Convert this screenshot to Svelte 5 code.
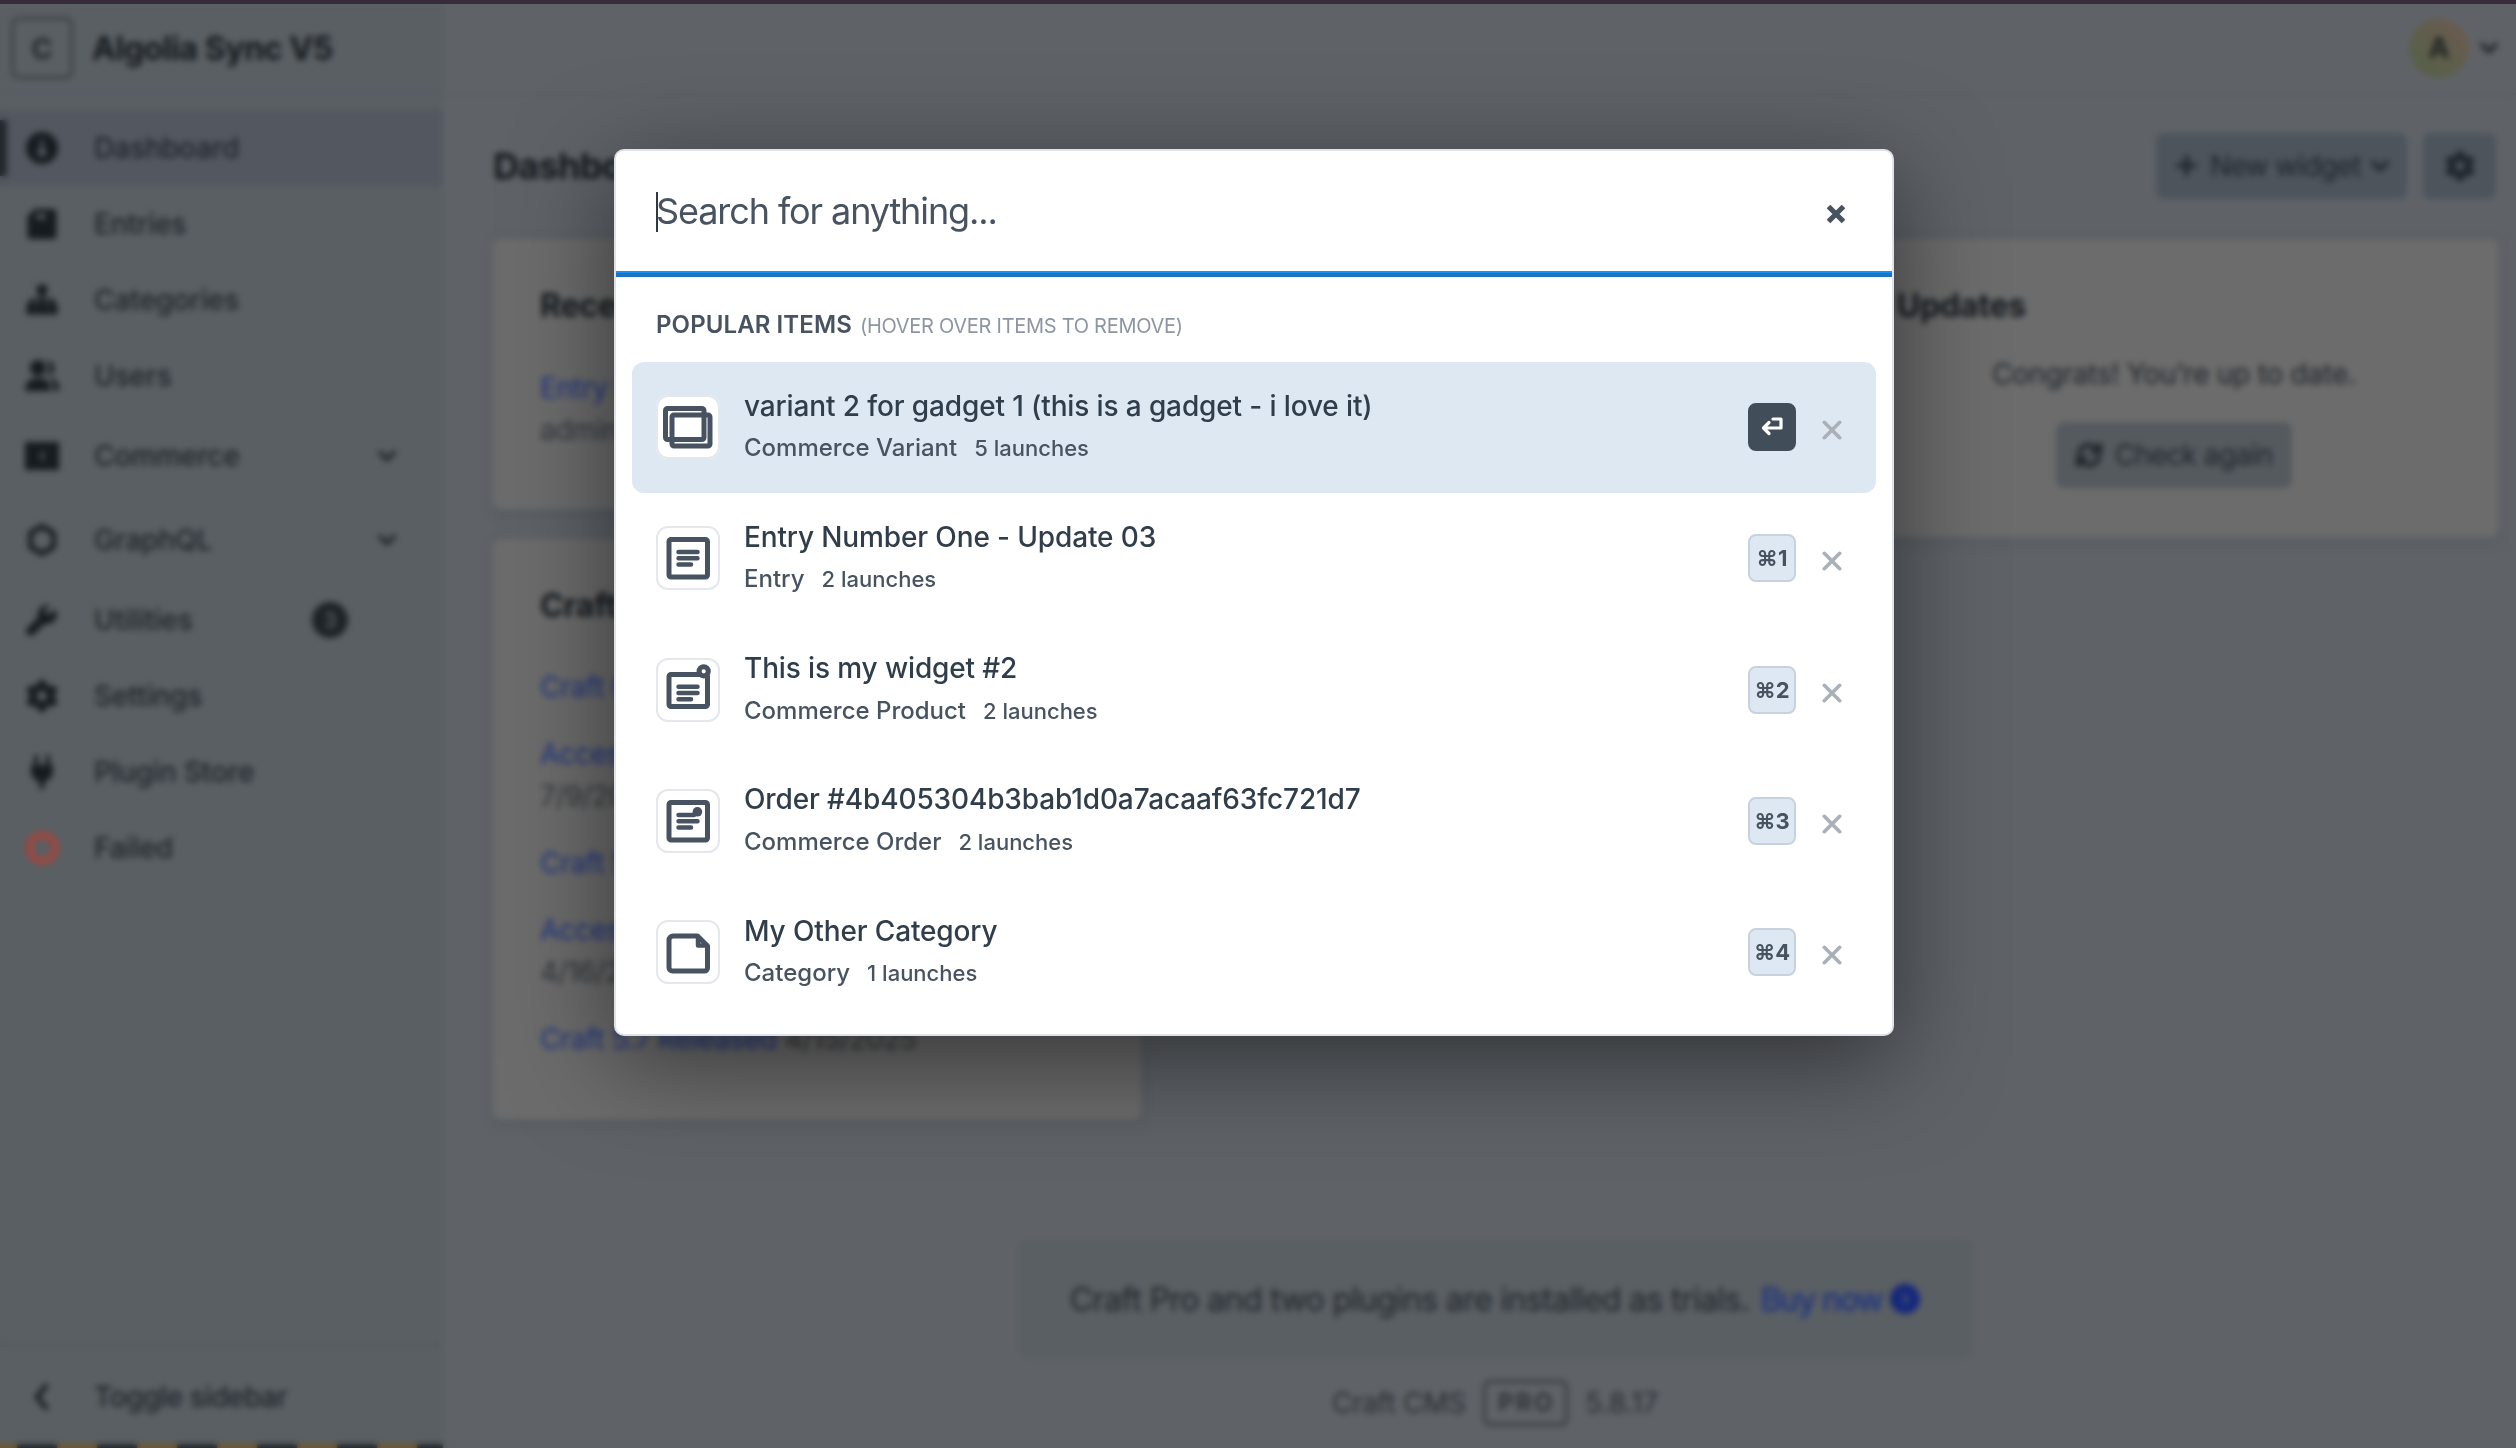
<script>
  const nav = [
    { label: 'Dashboard', icon: 'gauge', active: true },
    { label: 'Entries', icon: 'entries' },
    { label: 'Categories', icon: 'tree' },
    { label: 'Users', icon: 'users' },
    { label: 'Commerce', icon: 'commerce', expandable: true },
    { label: 'GraphQL', icon: 'graph', expandable: true },
    { label: 'Utilities', icon: 'wrench', badge: 3 },
    { label: 'Settings', icon: 'gear' },
    { label: 'Plugin Store', icon: 'plug' },
    { label: 'Failed', icon: 'failed' }
  ];

  const news = [
    { title: 'Craft Cloud', date: '' },
    { title: 'Accessibility Report', date: '7/9/2025' },
    { title: 'Craft 5.8 Released', date: '' },
    { title: 'Accessibility Update', date: '4/16/2025' },
    { title: 'Craft 5.7 Released', date: '4/15/2025', inline: true }
  ];

  const results = [
    { title: 'variant 2 for gadget 1 (this is a gadget - i love it)', type: 'Commerce Variant', launches: 5, icon: 'variant', selected: true },
    { title: 'Entry Number One - Update 03', type: 'Entry', launches: 2, icon: 'entry', key: '⌘1' },
    { title: 'This is my widget #2', type: 'Commerce Product', launches: 2, icon: 'product', key: '⌘2' },
    { title: 'Order #4b405304b3bab1d0a7acaaf63fc721d7', type: 'Commerce Order', launches: 2, icon: 'order', key: '⌘3' },
    { title: 'My Other Category', type: 'Category', launches: 1, icon: 'category', key: '⌘4' }
  ];
</script>

{#snippet chevron()}
  <svg class="chev" viewBox="0 0 22 22"><path d="M4 7.5l7 7 7-7" fill="none" stroke="currentColor" stroke-width="4" stroke-linecap="round" stroke-linejoin="round" /></svg>
{/snippet}

{#snippet gear()}
  <path fill="currentColor" fill-rule="evenodd" d="M14 1h6l1.500 4.500 3.500 2 4.700-1 3 5.300-3.200 3.500v3.400l3.200 3.500-3 5.300-4.700-1-3.500 2L20 33h-6l-1.500-4.500-3.500-2-4.700 1-3-5.300 3.200-3.500v-3.400L1.300 11.800l3-5.300 4.700 1 3.500-2zM17 12a5 5 0 1 0 0 10 5 5 0 0 0 0-10z" />
{/snippet}

{#snippet navIcon(name)}
  <svg class="nav-icon" viewBox="0 0 34 34" fill="currentColor">
    {#if name === 'gauge'}
      <path fill-rule="evenodd" d="M17 1a16 16 0 1 0 0 32 16 16 0 0 0 0-32zm-1.500 7h3v9a4.500 4.500 0 1 1-3 0z" />
    {:else if name === 'entries'}
      <path fill-rule="evenodd" d="M10 2h18a3.500 3.500 0 0 1 3.500 3.500v23A3.500 3.500 0 0 1 28 32H6a3.500 3.500 0 0 1-3.500-3.500V9zm1.500 5v5h9V7z" />
    {:else if name === 'tree'}
      <path d="M12 2h10v10h-3.500v4H30v5h2.500v10.500h-10V21H26v-1.500h-7V21h3v10.500H12V21h3v-1.500H8V21h3.500v10.500h-10V21H4v-5h11.500v-4H12z" />
    {:else if name === 'users'}
      <circle cx="13" cy="9" r="8" />
      <path d="M0 32c0-8 4-13 13-13s13 5 13 13z" />
      <path d="M22 1.500a7.500 7.500 0 0 1 0 15 12 12 0 0 0 0-15zM27 19c5 1.500 7.500 6 7.500 13H29c0-6-1-10-5-13z" />
    {:else if name === 'commerce'}
      <path fill-rule="evenodd" d="M0 3h34v28H0zM20 12a5 5 0 1 0 0 10v-2.500a2.500 2.500 0 1 1 0-5z" />
    {:else if name === 'graph'}
      <path d="M17 3.500l11.500 6.500v14L17 30.500 5.500 24V10z" fill="none" stroke="currentColor" stroke-width="5" stroke-linejoin="round" />
    {:else if name === 'wrench'}
      <path d="M29 6.500l-5 5-3.500-.8-.8-3.500 5-5a9.500 9.500 0 0 0-11.500 12L2.500 25a4.500 4.500 0 0 0 6.500 6.500l10.800-10.700A9.500 9.500 0 0 0 31.500 9z" />
    {:else if name === 'gear'}
      {@render gear()}
    {:else if name === 'plug'}
      <path d="M11 1v8M23 1v8" stroke="currentColor" stroke-width="4" stroke-linecap="round" />
      <path d="M6 10h22v6c0 6-4 9.500-8.500 10.500V34h-5v-7.500C10 25.500 6 22 6 16z" />
    {:else}
      <circle cx="17" cy="17" r="13" fill="none" stroke="#a0463e" stroke-width="7" />
    {/if}
  </svg>
{/snippet}

{#snippet typeIcon(name)}
  <svg class="type-icon" viewBox="0 0 64 64" fill="none" stroke="#475360" stroke-width="5" stroke-linecap="round" stroke-linejoin="round">
    {#if name === 'variant'}
      <rect x="9.500" y="13.500" width="38.500" height="31" rx="2" />
      <rect x="16" y="20" width="38" height="31" rx="2" />
    {:else if name === 'entry'}
      <rect x="13" y="13.500" width="38.500" height="37.500" rx="2" />
      <path stroke-width="4.500" d="M22.500 26H41.500M22.500 32.300H41.500M22.500 38.500H35" />
    {:else if name === 'product'}
      <rect x="13" y="16.500" width="38.500" height="32" rx="2" />
      <path stroke-width="4.500" d="M22.500 28.800H41.500M22.500 35H41.500M22.500 41.300H35" />
      <circle cx="47.700" cy="13.300" r="4.600" fill="#fff" />
    {:else if name === 'order'}
      <rect x="13" y="13.500" width="38.500" height="37.500" rx="2" />
      <path stroke-width="4.500" d="M22.500 26H38M22.500 32.300H41.500M22.500 38.500H35" />
      <circle cx="41.400" cy="22.800" r="4.800" fill="#475360" stroke="none" />
    {:else}
      <path d="M17 16h24.500l10 10v22a3 3 0 0 1-3 3H16.500a3.500 3.500 0 0 1-3.500-3.500V20a4 4 0 0 1 4-4z" />
      <path stroke-width="4.500" d="M42 17v8.500h9" />
    {/if}
  </svg>
{/snippet}

<div class="page">
  <aside class="sidebar">
    <div class="site">
      <span class="logo">C</span>
      <span class="site-name">Algolia Sync V5</span>
    </div>
    <nav>
      {#each nav as item}
        <div class="nav-item" class:active={item.active} class:tall={item.expandable}>
          {@render navIcon(item.icon)}
          <span class="nav-label">{item.label}</span>
          {#if item.badge}<span class="badge">{item.badge}</span>{/if}
          {#if item.expandable}{@render chevron()}{/if}
        </div>
      {/each}
    </nav>
    <div class="toggle">
      <svg class="back" viewBox="0 0 34 34"><path d="M21 6L12 17l9 11" fill="none" stroke="currentColor" stroke-width="4.500" stroke-linecap="round" stroke-linejoin="round" /></svg>
      <span class="toggle-label">Toggle sidebar</span>
    </div>
    <div class="stripes"></div>
  </aside>

  <main>
    <div class="topbar">
      <span class="avatar">A</span>
      {@render chevron()}
    </div>
    <div class="heading">
      <h1>Dashboard</h1>
      <div class="btn new-widget">
        <svg class="plus" viewBox="0 0 20 20"><path d="M10 1.500v17M1.500 10h17" stroke="currentColor" stroke-width="4" stroke-linecap="round" /></svg>
        <span>New widget</span>
        {@render chevron()}
      </div>
      <div class="btn settings">
        <svg class="gear" viewBox="0 0 34 34">{@render gear()}</svg>
      </div>
    </div>
    <div class="widgets">
      <div class="column">
        <section class="card recent">
          <h2>Recent Entries</h2>
          <p><a>Entry Number One</a></p>
          <p class="muted">admin</p>
        </section>
        <section class="card news">
          <h2>Craft News</h2>
          {#each news as n}
            <div class="news-item">
              <a>{n.title}</a>
              {#if n.inline}<span class="muted">{n.date}</span>{:else if n.date}<div class="muted">{n.date}</div>{/if}
            </div>
          {/each}
        </section>
      </div>
      <div class="column"></div>
      <div class="column">
        <section class="card updates">
          <h2>Updates</h2>
          <p class="congrats">Congrats! You’re up to date.</p>
          <div class="btn check">
            <svg class="refresh" viewBox="0 0 28 28" fill="none" stroke="currentColor" stroke-width="4.500"><path d="M4 13a10 10 0 0 1 17-6l3 3M24 15a10 10 0 0 1-17 6l-3-3" /><path d="M25 2v9h-9M3 26v-9h9" /></svg>
            <span>Check again</span>
          </div>
        </section>
      </div>
    </div>
    <footer>
      <div class="trial">
        <span>Craft Pro and two plugins are installed as trials.</span>
        <a class="buy">Buy now</a>
        <svg class="go" viewBox="0 0 30 30"><circle cx="15" cy="15" r="15" fill="#14277c" /><path d="M12.500 9.500l5.500 5.500-5.500 5.500" fill="none" stroke="#46516f" stroke-width="3" /></svg>
      </div>
      <div class="version">
        <span class="cms">Craft CMS</span><span class="edition">PRO</span><span>5.8.17</span>
      </div>
    </footer>
  </main>
</div>

<div class="env-bar"></div>
<div class="overlay">
  <div class="modal">
    <div class="search">
      <span class="caret"></span>
      <span class="placeholder">Search for anything...</span>
      <svg class="close" viewBox="0 0 20 20"><path d="M2.500 2.500l15 15M17.500 2.500l-15 15" stroke="#475360" stroke-width="5.200" /></svg>
    </div>
    <div class="section-title">
      <strong>POPULAR ITEMS</strong>
      <span>(HOVER OVER ITEMS TO REMOVE)</span>
    </div>
    {#each results as r}
      <div class="result" class:selected={r.selected}>
        {@render typeIcon(r.icon)}
        <div class="text">
          <div class="title">{r.title}</div>
          <div class="sub"><span class="type">{r.type}</span><span class="launches">{r.launches} launches</span></div>
        </div>
        {#if r.selected}
          <span class="key enter">
            <svg viewBox="0 0 24 20" fill="none" stroke="#fff" stroke-width="3.200" stroke-linecap="round" stroke-linejoin="round"><path d="M13 3h8v9H3.500M9 6.500L3.500 12 9 17.500" /></svg>
          </span>
        {:else}
          <span class="key">{r.key}</span>
        {/if}
        <svg class="remove" viewBox="0 0 20 22"><path d="M2.300 3.300l15.400 15.400M17.700 3.300L2.300 18.700" stroke="currentColor" stroke-width="3.600" stroke-linecap="round" /></svg>
      </div>
    {/each}
  </div>
</div>

<style>
  :global(body) {
    overflow: hidden;
    background: #5f6368;
    font-family: Inter, 'Liberation Sans', sans-serif;
  }
  * {
    box-sizing: border-box;
  }
  .page {
    display: flex;
    height: 1448px;
    color: #1f252b;
    font-size: 28px;
  }
  .chev {
    width: 22px;
    height: 22px;
    flex: none;
  }

  /* Sidebar */
  .sidebar {
    width: 443px;
    flex: none;
    display: flex;
    flex-direction: column;
    background: #5a5f63;
  }
  .site {
    height: 94px;
    flex: none;
    display: flex;
    align-items: center;
    padding: 4px 0 0 11px;
    border-bottom: 2px solid #575b66;
  }
  .logo {
    width: 62px;
    height: 62px;
    border: 3px solid #3d4047;
    border-radius: 8px;
    display: grid;
    place-items: center;
    font-weight: 700;
    font-size: 29px;
    color: #23282e;
  }
  .site-name {
    margin-left: 19px;
    font-size: 32px;
    font-weight: 700;
    letter-spacing: -0.4px;
    color: #14191e;
  }
  nav {
    padding-top: 16px;
    flex: 1;
  }
  .nav-item {
    height: 76px;
    display: flex;
    align-items: center;
    padding: 0 45px 0 25px;
    font-weight: 500;
    letter-spacing: -0.1px;
  }
  .nav-item.tall {
    height: 84px;
  }
  .nav-item.active {
    background: linear-gradient(#22282c, #22282c) 0 50% / 7px 56px no-repeat, #535860;
  }
  .nav-icon,
  .back {
    width: 34px;
    height: 34px;
    flex: none;
    color: #161b20;
  }
  .nav-label {
    flex: 1;
    margin-left: 35px;
  }
  .badge {
    width: 36px;
    height: 36px;
    margin-right: 50px;
    border-radius: 50%;
    background: #1d2226;
    color: #5a5f63;
    font-size: 22px;
    display: grid;
    place-items: center;
  }
  .toggle {
    height: 99px;
    display: flex;
    align-items: center;
    padding: 2px 0 0 25px;
    border-top: 2px solid #52575b;
    font-weight: 500;
  }
  .toggle-label {
    margin-left: 35px;
    letter-spacing: -0.4px;
  }
  .stripes {
    height: 4px;
    background: repeating-linear-gradient(90deg, #6e5730 0 40px, #22272b 40px 80px) -23px 0 / 520px 5px;
  }

  /* Main */
  main {
    flex: 1;
    display: flex;
    flex-direction: column;
    background: #5f6368;
  }
  .topbar {
    height: 95px;
    flex: none;
    display: flex;
    align-items: center;
    justify-content: flex-end;
    gap: 9px;
    padding: 2px 16px 0 0;
    border-bottom: 2px solid #5a5e63;
  }
  .avatar {
    width: 60px;
    height: 60px;
    border-radius: 50%;
    background: linear-gradient(45deg, #566049 10%, #5f5e4c 50%, #6c5a50 90%);
    display: grid;
    place-items: center;
    font-weight: 700;
    color: #1f2423;
  }
  .heading {
    height: 144px;
    flex: none;
    display: flex;
    align-items: center;
    padding: 0 20px 3px 50px;
    gap: 16px;
  }
  h1 {
    margin: 0;
    flex: 1;
    font-size: 36px;
    font-weight: 700;
    letter-spacing: -0.7px;
    color: #14191e;
  }
  .btn {
    height: 66px;
    border-radius: 8px;
    background: #4d545c;
    display: flex;
    align-items: center;
    justify-content: center;
  }
  .new-widget {
    width: 251px;
    gap: 8px;
    padding-left: 4px;
    letter-spacing: -0.6px;
  }
  .plus {
    width: 21px;
    height: 21px;
    margin-right: 5px;
  }
  .settings {
    width: 73px;
  }
  .gear {
    width: 32px;
    height: 32px;
  }
  .widgets {
    flex: 1;
    display: grid;
    grid-template-columns: repeat(3, 1fr);
    gap: 30px;
    padding: 0 18px 0 50px;
  }
  .column {
    display: flex;
    flex-direction: column;
    gap: 30px;
  }
  .card {
    border-radius: 8px;
    background: #6c6c6c;
    padding: 46px 47px 0;
    line-height: 42px;
    box-shadow: 0 0 0 2px #5b6065, 0 4px 12px #565b60;
  }
  h2 {
    margin: 0;
    font-size: 32px;
    font-weight: 700;
    line-height: 42px;
    letter-spacing: -0.2px;
    color: #14191e;
  }
  p {
    margin: 0;
  }
  a {
    color: #1e3380;
    letter-spacing: -0.3px;
  }
  .muted {
    color: #31353a;
    letter-spacing: -0.4px;
  }
  .recent {
    height: 270px;
  }
  .recent h2 {
    margin-bottom: 40px;
  }
  .news {
    height: 580px;
  }
  .news h2 {
    margin-bottom: 39px;
  }
  .news-item {
    margin-bottom: 25px;
  }
  .updates {
    height: 298px;
  }
  .congrats {
    margin: 26px 0 27px;
    text-align: center;
    letter-spacing: -0.22px;
  }
  .check {
    width: 236px;
    margin: 0 auto;
    gap: 12px;
    background: #555a5f;
    letter-spacing: -0.6px;
  }
  .refresh {
    width: 28px;
    height: 28px;
  }
  footer {
    display: flex;
    flex-direction: column;
    align-items: center;
    padding: 0 0 22px 31px;
  }
  .trial {
    width: 949px;
    height: 114px;
    border-radius: 8px;
    background: #5a5f63;
    box-shadow: 0 0 0 2px #575c60;
    display: flex;
    align-items: center;
    justify-content: center;
    font-size: 32px;
    letter-spacing: -0.63px;
  }
  .buy {
    margin: 0 8px 0 11px;
    font-weight: 500;
    letter-spacing: -1.4px;
  }
  .go {
    width: 30px;
    height: 30px;
  }
  .version {
    height: 47px;
    margin-top: 23px;
    display: flex;
    align-items: center;
    gap: 17px;
    color: #2a2f34;
  }
  .cms {
    letter-spacing: -0.3px;
  }
  .edition {
    width: 85px;
    height: 46px;
    border: 3px solid #363b40;
    border-radius: 7px;
    display: grid;
    place-items: center;
    font-size: 24px;
    font-weight: 600;
    letter-spacing: 2.5px;
    padding-left: 2px;
  }

  /* Overlay and launcher */
  .env-bar {
    position: fixed;
    inset: 0 0 auto 0;
    height: 4px;
    background: #382b3b;
    z-index: 2;
  }
  .overlay {
    position: fixed;
    inset: 4px 0 0 0;
    padding: 145px 0 0 614px;
    backdrop-filter: blur(3.3px);
  }
  .modal {
    width: 1280px;
    height: 887px;
    border: 2px solid #dfe2e8;
    border-radius: 10px;
    background: #fff;
    box-shadow: 0 25px 100px rgba(0, 0, 0, 0.5);
  }
  .search {
    height: 126px;
    display: flex;
    align-items: center;
    padding: 0 46px 0 40px;
    border-bottom: 4px solid #1a74c0;
    box-shadow: inset 0 -2px #1a90f5;
  }
  .caret {
    width: 2px;
    height: 40px;
    margin-right: -2px;
    background: #2c3a47;
  }
  .placeholder {
    flex: 1;
    padding-bottom: 2px;
    font-size: 36px;
    letter-spacing: -1.1px;
    color: #475360;
  }
  .close {
    width: 20px;
    height: 20px;
    margin-top: 3px;
  }
  .section-title {
    height: 85px;
    display: flex;
    align-items: baseline;
    gap: 8px;
    padding: 34px 0 0 40px;
    line-height: 28px;
    font-size: 24px;
    color: #475360;
  }
  .section-title strong {
    font-weight: 600;
    letter-spacing: 0.1px;
  }
  .section-title span {
    font-size: 20px;
    letter-spacing: -0.28px;
    color: #8c96a3;
  }
  .result {
    height: 131.25px;
    margin: 0 16px;
    padding: 0 34px 1px 24px;
    border-radius: 12px;
    display: flex;
    align-items: center;
  }
  .result.selected {
    background: #dee8f2;
  }
  .type-icon {
    width: 64px;
    height: 64px;
    flex: none;
    border-radius: 12px;
    background: #fff;
    box-shadow: inset 0 0 0 2px #e4e7eb;
  }
  .text {
    flex: 1;
    margin-left: 24px;
    line-height: 42.5px;
    font-weight: 500;
  }
  .title {
    font-size: 28px;
    letter-spacing: -0.13px;
    color: #303d4a;
  }
  .sub {
    display: flex;
    align-items: baseline;
    font-size: 24px;
    color: #475360;
  }
  .launches {
    margin-left: 17px;
    font-size: 22px;
  }
  .key {
    width: 48px;
    height: 48px;
    border: 2px solid #c7d2df;
    border-radius: 8px;
    background: #dee8f2;
    color: #475360;
    font-size: 22px;
    font-weight: 700;
    display: grid;
    place-items: center;
  }
  .key.enter {
    border-color: #414d59;
    background: #414d59;
  }
  .enter svg {
    width: 24px;
    height: 20px;
    margin-top: -2px;
  }
  .remove {
    width: 20px;
    height: 22px;
    margin: 6px 0 0 26px;
    color: #a9b0b7;
  }
</style>
